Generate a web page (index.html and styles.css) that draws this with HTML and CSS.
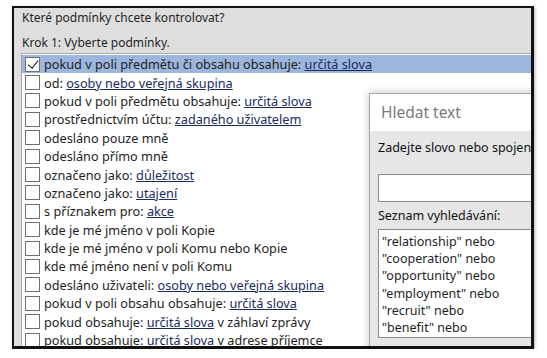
FILE: index.html
```html
<!DOCTYPE html>
<html lang="cs">
<head>
    <meta charset="UTF-8">
    <title>Správce pravidel</title>
    <link rel="stylesheet" href="styles.css">
</head>
<body>
    <div class="frame">
        <div class="wizard-head">
            <div class="question">Které podmínky chcete kontrolovat?</div>
            <div class="step">Krok 1: Vyberte podmínky.</div>
        </div>

        <div class="cond-list">
            <div class="cond selected"><span class="box checked"></span><span>pokud v poli předmětu či obsahu obsahuje: <a>určitá slova</a></span></div>
            <div class="cond"><span class="box"></span><span>od: <a>osoby nebo veřejná skupina</a></span></div>
            <div class="cond"><span class="box"></span><span>pokud v poli předmětu obsahuje: <a>určitá slova</a></span></div>
            <div class="cond"><span class="box"></span><span>prostřednictvím účtu: <a>zadaného uživatelem</a></span></div>
            <div class="cond"><span class="box"></span><span>odesláno pouze mně</span></div>
            <div class="cond"><span class="box"></span><span>odesláno přímo mně</span></div>
            <div class="cond"><span class="box"></span><span>označeno jako: <a>důležitost</a></span></div>
            <div class="cond"><span class="box"></span><span>označeno jako: <a>utajení</a></span></div>
            <div class="cond"><span class="box"></span><span>s příznakem pro: <a>akce</a></span></div>
            <div class="cond"><span class="box"></span><span>kde je mé jméno v poli Kopie</span></div>
            <div class="cond"><span class="box"></span><span>kde je mé jméno v poli Komu nebo Kopie</span></div>
            <div class="cond"><span class="box"></span><span>kde mé jméno není v poli Komu</span></div>
            <div class="cond"><span class="box"></span><span>odesláno uživateli: <a>osoby nebo veřejná skupina</a></span></div>
            <div class="cond"><span class="box"></span><span>pokud v poli obsahu obsahuje: <a>určitá slova</a></span></div>
            <div class="cond"><span class="box"></span><span>pokud obsahuje: <a>určitá slova</a> v záhlaví zprávy</span></div>
            <div class="cond"><span class="box"></span><span>pokud obsahuje: <a>určitá slova</a> v adrese příjemce</span></div>
        </div>

        <!-- dialog nad seznamem -->
        <div class="search-dialog">
            <div class="dialog-title">Hledat text</div>
            <div class="dialog-body">
                <div class="label first">Zadejte slovo nebo spojení</div>
                <div class="text-input"></div>
                <div class="label">Seznam vyhledávání:</div>
                <div class="search-list">
                    <div>"relationship" nebo</div>
                    <div>"cooperation" nebo</div>
                    <div>"opportunity" nebo</div>
                    <div>"employment" nebo</div>
                    <div>"recruit" nebo</div>
                    <div>"benefit" nebo</div>
                </div>
            </div>
        </div>
    </div>
</body>
</html>
```

FILE: styles.css
```css
body {
    margin: 0;
    background-color: white;
    font-family: 'Noto Sans', 'Open Sans', sans-serif;
    font-size: 12px;
    color: #1e1e1e;
}
.frame {
    position: relative;
    margin: 6px 0 0 12px;
    width: 517px;
    height: 338px;
    border: 2px solid #111;
    border-right-width: 3px;
    border-bottom-width: 3px;
    background-color: #dedede;
    overflow: hidden;
    box-shadow: 1px 1px 3px rgba(0,0,0,0.3);
}
.wizard-head {
    padding: 1px 0 0 8px;
}
.question {
    height: 18px;
    line-height: 18px;
}
.step {
    margin-top: 7px;
    height: 18px;
    line-height: 18px;
}
.cond-list {
    margin: 1px 0 0 7px;
    border-top: 1px solid #a9a9a9;
    border-left: 1px solid #a9a9a9;
    background-color: white;
    height: 300px;
    padding-top: 1px;
    font-size: 12.7px;
}
.cond {
    display: flex;
    align-items: center;
    height: 18.4px;
    white-space: nowrap;
    padding-left: 3px;
}
.cond.selected {
    background-color: #9cb6de;
}
.cond a {
    color: #1b2a5e;
    text-decoration: underline;
}
.box {
    width: 13px;
    height: 13px;
    border: 1px solid #707070;
    background-color: white;
    margin-right: 4px;
    flex-shrink: 0;
    position: relative;
}
.box.checked::after {
    content: "";
    position: absolute;
    left: 4px;
    top: 0px;
    width: 5px;
    height: 9px;
    border: solid #111;
    border-width: 0 1.6px 1.6px 0;
    transform: rotate(38deg);
}
.search-dialog {
    position: absolute;
    left: 355px;
    top: 85px;
    width: 220px;
    height: 270px;
    border: 1px solid #a8a8a8;
    background-color: #e6e6e6;
    box-shadow: 0 0 8px rgba(0,0,0,0.25);
}
.dialog-title {
    height: 37px;
    line-height: 37px;
    padding-left: 11px;
    background-color: white;
    color: #7a7a7a;
    font-size: 15.5px;
}
.dialog-body {
    padding: 8px 0 0 8px;
    font-size: 12.5px;
}
.label {
    height: 18px;
    line-height: 18px;
    white-space: nowrap;
    color: #111;
}
.label.first {
    margin-bottom: 17px;
}
.text-input {
    height: 26px;
    background-color: white;
    border: 1px solid #8a8a8a;
    margin-bottom: 5px;
}
.search-list {
    margin-top: 4px;
    height: 104px;
    background-color: white;
    border: 1px solid #8a8a8a;
    padding: 3px 0 0 3px;
}
.search-list div {
    height: 17.2px;
    line-height: 17.2px;
    white-space: nowrap;
}
```
